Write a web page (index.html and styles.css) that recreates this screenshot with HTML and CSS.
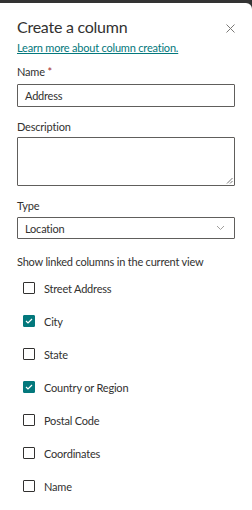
FILE: index.html
```html
<!DOCTYPE html>
<html>
<head>
<meta charset="utf-8">
<link rel="stylesheet" href="styles.css">
</head>
<body>
<div class="panel">
  <div class="header">
    <h1 class="title">Create a column</h1>
    <span class="close" aria-label="Close">
      <svg width="9" height="9" viewBox="0 0 9 9"><path d="M0.5 0.5L8.5 8.5M8.5 0.5L0.5 8.5" stroke="#7a7876" stroke-width="1" fill="none"/></svg>
    </span>
  </div>
  <a class="link" href="#">Learn more about column creation.</a>

  <div class="label lbl-name">Name <span class="req">*</span></div>
  <div class="input"><span>Address</span></div>

  <div class="label lbl-desc">Description</div>
  <div class="textarea">
    <svg class="grip" width="7" height="7" viewBox="0 0 7 7"><path d="M6.5 1L1 6.5M6.5 4L4 6.5" stroke="#777" stroke-width="1" fill="none"/></svg>
  </div>

  <div class="label lbl-type">Type</div>
  <div class="select">
    <span>Location</span>
    <svg width="9" height="6" viewBox="0 0 9 6"><path d="M1 1L4.5 4.5L8 1" stroke="#a19f9d" stroke-width="1" fill="none"/></svg>
  </div>

  <div class="hint">Show linked columns in the current view</div>

  <ul class="checks">
    <li class="check"><span class="box"></span>Street Address</li>
    <li class="check on"><span class="box"><svg width="8" height="6" viewBox="0 0 8 6"><path d="M1 3L3 5L7 1" stroke="#fff" stroke-width="1.2" fill="none"/></svg></span>City</li>
    <li class="check"><span class="box"></span>State</li>
    <li class="check on"><span class="box"><svg width="8" height="6" viewBox="0 0 8 6"><path d="M1 3L3 5L7 1" stroke="#fff" stroke-width="1.2" fill="none"/></svg></span>Country or Region</li>
    <li class="check"><span class="box"></span>Postal Code</li>
    <li class="check"><span class="box"></span>Coordinates</li>
    <li class="check"><span class="box"></span>Name</li>
  </ul>
</div>
</body>
</html>
```
FILE: styles.css
```css
html, body {
  margin: 0;
  padding: 0;
}
body {
  background: #333333;
  font-family: Lato, "Open Sans", sans-serif;
  color: #323130;
  font-size: 11px;
  letter-spacing: -0.2px;
}
.panel {
  margin-top: 3px;
  background: #ffffff;
  border-top-right-radius: 6px;
  min-height: 507px;
  padding: 0 17px 0 17px;
  box-sizing: border-box;
}
.header {
  display: flex;
  align-items: center;
  justify-content: space-between;
  padding-top: 12px;
  height: 24px;
}
.title {
  margin: 0;
  font-size: 16px;
  font-weight: 400;
  line-height: 24px;
  letter-spacing: -0.25px;
  color: #323130;
}
.close {
  display: flex;
  margin-right: 0;
  margin-top: 2px;
}
.link {
  display: block;
  margin-top: 1px;
  line-height: 16px;
  color: #03787c;
  text-decoration: underline;
}
.label {
  line-height: 16px;
}
.lbl-name { margin-top: 8px; }
.req { color: #a4262c; }
.input {
  margin-top: 4px;
  height: 23px;
  border: 1px solid #605e5c;
  box-sizing: border-box;
  display: flex;
  align-items: center;
  padding-left: 7px;
  border-radius: 1px;
}
.lbl-desc { margin-top: 12px; }
.textarea {
  margin-top: 2px;
  height: 49px;
  border: 1px solid #605e5c;
  box-sizing: border-box;
  border-radius: 1px;
  display: flex;
  justify-content: flex-end;
  align-items: flex-end;
}
.grip { margin: 0 1px 1px 0; }
.lbl-type { margin-top: 12px; }
.select {
  margin-top: 3px;
  height: 22px;
  border: 1px solid #605e5c;
  box-sizing: border-box;
  border-radius: 1px;
  display: flex;
  align-items: center;
  justify-content: space-between;
  padding: 0 9px 0 7px;
}
.hint {
  margin-top: 15px;
  line-height: 16px;
}
.checks {
  list-style: none;
  margin: 10px 0 0 0;
  padding: 0 0 0 6px;
  display: flex;
  flex-direction: column;
  gap: 17px;
}
.check {
  display: flex;
  align-items: center;
  height: 16px;
  gap: 9px;
}
.box {
  width: 12px;
  height: 12px;
  border: 1px solid #323130;
  box-sizing: border-box;
  border-radius: 1px;
  display: flex;
  align-items: center;
  justify-content: center;
}
.on .box {
  background: #03787c;
  border-color: #03787c;
}
```
